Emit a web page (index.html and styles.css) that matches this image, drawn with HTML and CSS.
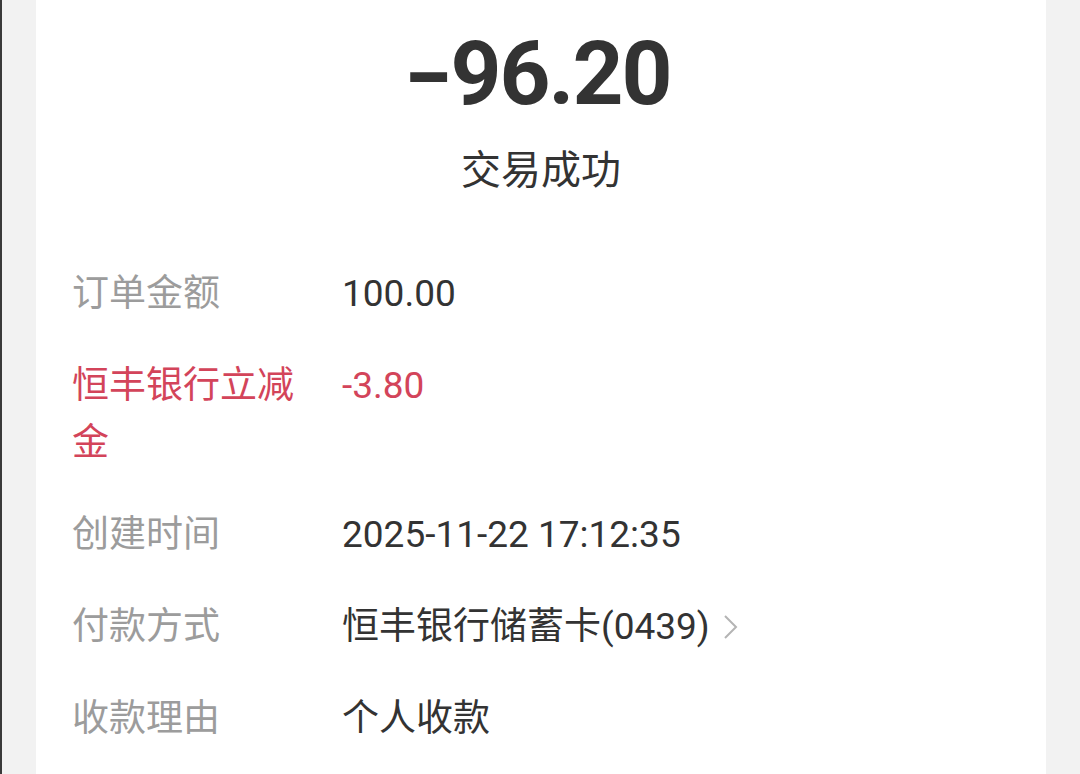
FILE: index.html
```html
<!DOCTYPE html>
<html lang="zh-CN">
<head>
<meta charset="utf-8">
<link rel="stylesheet" href="styles.css">
</head>
<body>
<div class="frame">
  <div class="card">
    <div class="amount"><span class="minus">-</span>96.20</div>
    <div class="status">交易成功</div>
    <div class="rows">
      <div class="row">
        <div class="label">订单金额</div>
        <div class="value">100.00</div>
      </div>
      <div class="row red">
        <div class="label">恒丰银行立减金</div>
        <div class="value">-3.80</div>
      </div>
      <div class="row">
        <div class="label">创建时间</div>
        <div class="value">2025-11-22 17:12:35</div>
      </div>
      <div class="row">
        <div class="label">付款方式</div>
        <div class="value link">恒丰银行储蓄卡(0439)<svg class="chev" width="20" height="28" viewBox="0 0 20 28"><path d="M5 3 L16 14 L5 25" fill="none" stroke="#b4b4b4" stroke-width="2"/></svg></div>
      </div>
      <div class="row">
        <div class="label">收款理由</div>
        <div class="value">个人收款</div>
      </div>
    </div>
  </div>
</div>
</body>
</html>
```
FILE: styles.css
```css
html, body {
  margin: 0;
  padding: 0;
  height: 100%;
}
body {
  background: #f2f2f2;
  font-family: Roboto, "Noto Sans CJK SC", sans-serif;
  overflow: hidden;
}
.frame {
  height: 100%;
  border-left: 2px solid #3a3a3a;
  padding: 0 34px 0 34px;
  box-sizing: border-box;
}
.card {
  background: #fff;
  height: 100%;
  padding: 0 36px;
  box-sizing: border-box;
}
.amount {
  text-align: center;
  font-family: Roboto, sans-serif;
  font-weight: 700;
  font-size: 89px;
  line-height: 1;
  color: #333;
  padding-top: 29px;
  letter-spacing: -2px;
}
.minus {
  display: inline-block;
  transform: scaleX(1.5);
  margin-right: 6px;
}
.status {
  text-align: center;
  font-size: 40px;
  color: #333;
  margin-top: 29px;
  line-height: 1.2;
}
.rows {
  margin-top: 70px;
  display: flex;
  flex-direction: column;
  gap: 35px;
}
.row {
  display: flex;
  font-size: 37px;
  line-height: 57px;
}
.label {
  width: 236px;
  flex: none;
  color: #9c9c9c;
  margin-right: 34px;
}
.value {
  color: #333;
  display: flex;
  align-items: center;
}
.row.red .label, .row.red .value {
  color: #d3445a;
  align-self: flex-start;
}
.chev {
  margin-left: 10px;
}
```
